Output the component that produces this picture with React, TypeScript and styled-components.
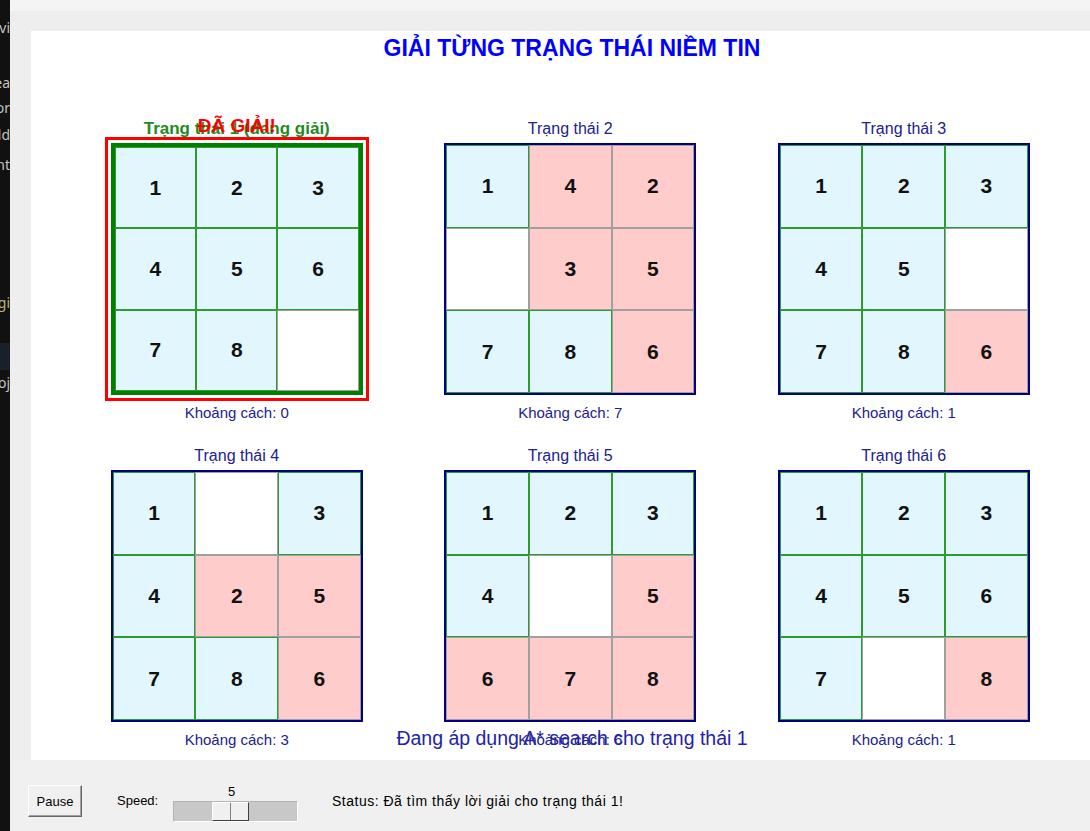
import styled, { createGlobalStyle } from "styled-components";

type TileState = "ok" | "bad" | "blank";

interface IBoard {
  title: string;
  tiles: number[];
  distance: number;
  solved?: boolean;
}

const boards: IBoard[] = [
  { title: "Trạng thái 1 (đang giải)", tiles: [1, 2, 3, 4, 5, 6, 7, 8, 0], distance: 0, solved: true },
  { title: "Trạng thái 2", tiles: [1, 4, 2, 0, 3, 5, 7, 8, 6], distance: 7 },
  { title: "Trạng thái 3", tiles: [1, 2, 3, 4, 5, 0, 7, 8, 6], distance: 1 },
  { title: "Trạng thái 4", tiles: [1, 0, 3, 4, 2, 5, 7, 8, 6], distance: 3 },
  { title: "Trạng thái 5", tiles: [1, 2, 3, 4, 0, 5, 6, 7, 8], distance: 6 },
  { title: "Trạng thái 6", tiles: [1, 2, 3, 4, 5, 6, 7, 0, 8], distance: 1 },
];

// bits of the editor window peeking out on the left
const stripLines = [
  { text: "Provi", gap: 18 },
  { text: "Crea", gap: 35 },
  { text: "Stor", gap: 5 },
  { text: "Add", gap: 7 },
  { text: "Print", gap: 10 },
  { text: "Settingi", gap: 118, tint: "#b9b27a" },
];

const GlobalStyle = createGlobalStyle`
  body {
    margin: 0;
    overflow: hidden;
    background: #f0f0f0;
    font-family: "Liberation Sans", Arial, sans-serif;
  }
`;

const Page = styled.div`
  display: grid;
  grid-template-columns: 10px 1fr;
  width: 1090px;
  height: 831px;
  overflow: hidden;
`;

const Strip = styled.div`
  display: flex;
  flex-direction: column;
  background: #111111;
  overflow: hidden;
`;

const StripLine = styled.div<{ $gap: number; $tint?: string }>`
  display: flex;
  justify-content: flex-end;
  margin-top: ${({ $gap }) => $gap}px;
  height: 20px;
  line-height: 20px;
  font-family: "Noto Sans", sans-serif;
  font-size: 14px;
  white-space: nowrap;
  color: ${({ $tint }) => $tint ?? "#c4c4c4"};
`;

const StripHighlight = styled.div`
  margin-top: 30px;
  height: 27px;
  background: #1a1f2c;
`;

const Main = styled.div`
  display: flex;
  flex-direction: column;
  min-width: 0;
`;

const TopBand = styled.div`
  height: 11px;
  background: #f4f4f4;
`;

const Workspace = styled.div`
  background: #eeeeee;
  padding: 20px 0 0 21px;
  overflow: hidden;
`;

const Canvas = styled.div`
  position: relative;
  display: flow-root;
  width: 1082px;
  height: 729px;
  background: #ffffff;
`;

const Title = styled.h1`
  margin: 4px 0 0;
  height: 26px;
  line-height: 26px;
  text-align: center;
  font-size: 23px;
  font-weight: bold;
  color: #0000ff;
`;

const BoardGrid = styled.div`
  display: grid;
  grid-template-columns: repeat(3, 333.5px);
  row-gap: 27px;
  margin-top: 60px;
  padding-left: 39px;
`;

const StateBlock = styled.div`
  position: relative;
  display: flex;
  flex-direction: column;
  align-items: center;
`;

const StateTitle = styled.div<{ $solved?: boolean }>`
  height: 16px;
  line-height: 16px;
  margin-bottom: 6px;
  white-space: nowrap;
  font-size: ${({ $solved }) => ($solved ? "17px" : "16px")};
  font-weight: ${({ $solved }) => ($solved ? "bold" : "normal")};
  color: ${({ $solved }) => ($solved ? "#228b22" : "#22228c")};
`;

const SolvedBadge = styled.div`
  position: absolute;
  top: -5px;
  left: 0;
  right: 0;
  line-height: 20px;
  text-align: center;
  font-size: 19px;
  font-weight: bold;
  color: #ff0000;
`;

const Board = styled.div<{ $solved?: boolean }>`
  box-sizing: border-box;
  display: grid;
  grid-template-columns: repeat(3, 1fr);
  grid-template-rows: repeat(3, 1fr);
  width: 252px;
  height: 252px;
  border: ${({ $solved }) => ($solved ? "4px solid #008000" : "2px solid #000080")};
  outline: ${({ $solved }) => ($solved ? "3px solid #ff0000" : "none")};
  outline-offset: 3px;
`;

const tileBg: Record<TileState, string> = {
  ok: "#e2f6fe",
  bad: "#ffcccc",
  blank: "#ffffff",
};

const Tile = styled.div<{ $state: TileState }>`
  display: flex;
  align-items: center;
  justify-content: center;
  border: 1px solid ${({ $state }) => ($state === "ok" ? "#2f9a2f" : "#a0a0a0")};
  background: ${({ $state }) => tileBg[$state]};
  font-size: 21px;
  font-weight: bold;
  color: #111111;
`;

const Distance = styled.div`
  margin-top: 10px;
  height: 16px;
  line-height: 16px;
  font-size: 15px;
  color: #22228c;
`;

const SearchNote = styled.div`
  position: absolute;
  left: 0;
  right: 0;
  top: 696px;
  line-height: 22px;
  text-align: center;
  font-size: 19.5px;
  color: #2323a8;
`;

const ControlBar = styled.div`
  display: flex;
  align-items: flex-start;
  height: 71px;
  box-sizing: border-box;
  padding: 25px 0 0 18px;
  background: #f0f0f0;
  font-size: 13px;
  color: #000000;
`;

const Button = styled.button`
  box-sizing: border-box;
  width: 54px;
  height: 32px;
  padding: 0;
  background: #f0f0f0;
  border: 1px solid;
  border-color: #ffffff #696969 #696969 #ffffff;
  box-shadow: inset -1px -1px 0 #a0a0a0;
  font-family: inherit;
  font-size: 13px;
  color: #000000;
`;

const SpeedLabel = styled.div`
  width: 56px;
  margin: 8px 0 0 35px;
  line-height: 16px;
`;

const Slider = styled.div`
  display: flex;
  flex-direction: column;
  width: 125px;
  margin-top: -1px;
`;

const SliderValue = styled.div`
  height: 17px;
  line-height: 15px;
  padding-left: 55px;
`;

const Trough = styled.div`
  box-sizing: border-box;
  display: flex;
  height: 21px;
  background: #c8c8c8;
  border: 1px solid;
  border-color: #b4b4b4 #ffffff #ffffff #b4b4b4;
`;

const Thumb = styled.div`
  box-sizing: border-box;
  display: flex;
  width: 37px;
  margin-left: 38px;
  background: #f0f0f0;
  border: 1px solid;
  border-color: #ffffff #404040 #404040 #ffffff;
`;

const ThumbHalf = styled.div`
  flex: 1;
  & + & {
    border-left: 1px solid #808080;
  }
`;

const Status = styled.div`
  margin: 8px 0 0 34px;
  line-height: 16px;
  font-size: 14px;
  letter-spacing: 0.5px;
  white-space: nowrap;
`;

const tileState = (value: number, index: number): TileState =>
  value === 0 ? "blank" : value === index + 1 ? "ok" : "bad";

const StateView = ({ board }: { board: IBoard }) => (
  <StateBlock>
    <StateTitle $solved={board.solved}>{board.title}</StateTitle>
    {board.solved && <SolvedBadge>ĐÃ GIẢI!</SolvedBadge>}
    <Board $solved={board.solved}>
      {board.tiles.map((value, i) => (
        <Tile key={i} $state={tileState(value, i)}>
          {value !== 0 && value}
        </Tile>
      ))}
    </Board>
    <Distance>Khoảng cách: {board.distance}</Distance>
  </StateBlock>
);

export default function App() {
  return (
    <>
      <GlobalStyle />
      <Page>
        <Strip>
          {stripLines.map((line) => (
            <StripLine key={line.text} $gap={line.gap} $tint={line.tint}>
              {line.text}
            </StripLine>
          ))}
          <StripHighlight />
          <StripLine $gap={3}>Proj</StripLine>
        </Strip>
        <Main>
          <TopBand />
          <Workspace>
            <Canvas>
              <Title>GIẢI TỪNG TRẠNG THÁI NIỀM TIN</Title>
              <BoardGrid>
                {boards.map((board) => (
                  <StateView key={board.title} board={board} />
                ))}
              </BoardGrid>
              <SearchNote>Đang áp dụng A* search cho trạng thái 1</SearchNote>
            </Canvas>
          </Workspace>
          <ControlBar>
            <Button>Pause</Button>
            <SpeedLabel>Speed:</SpeedLabel>
            <Slider>
              <SliderValue>5</SliderValue>
              <Trough>
                <Thumb>
                  <ThumbHalf />
                  <ThumbHalf />
                </Thumb>
              </Trough>
            </Slider>
            <Status>Status: Đã tìm thấy lời giải cho trạng thái 1!</Status>
          </ControlBar>
        </Main>
      </Page>
    </>
  );
}
